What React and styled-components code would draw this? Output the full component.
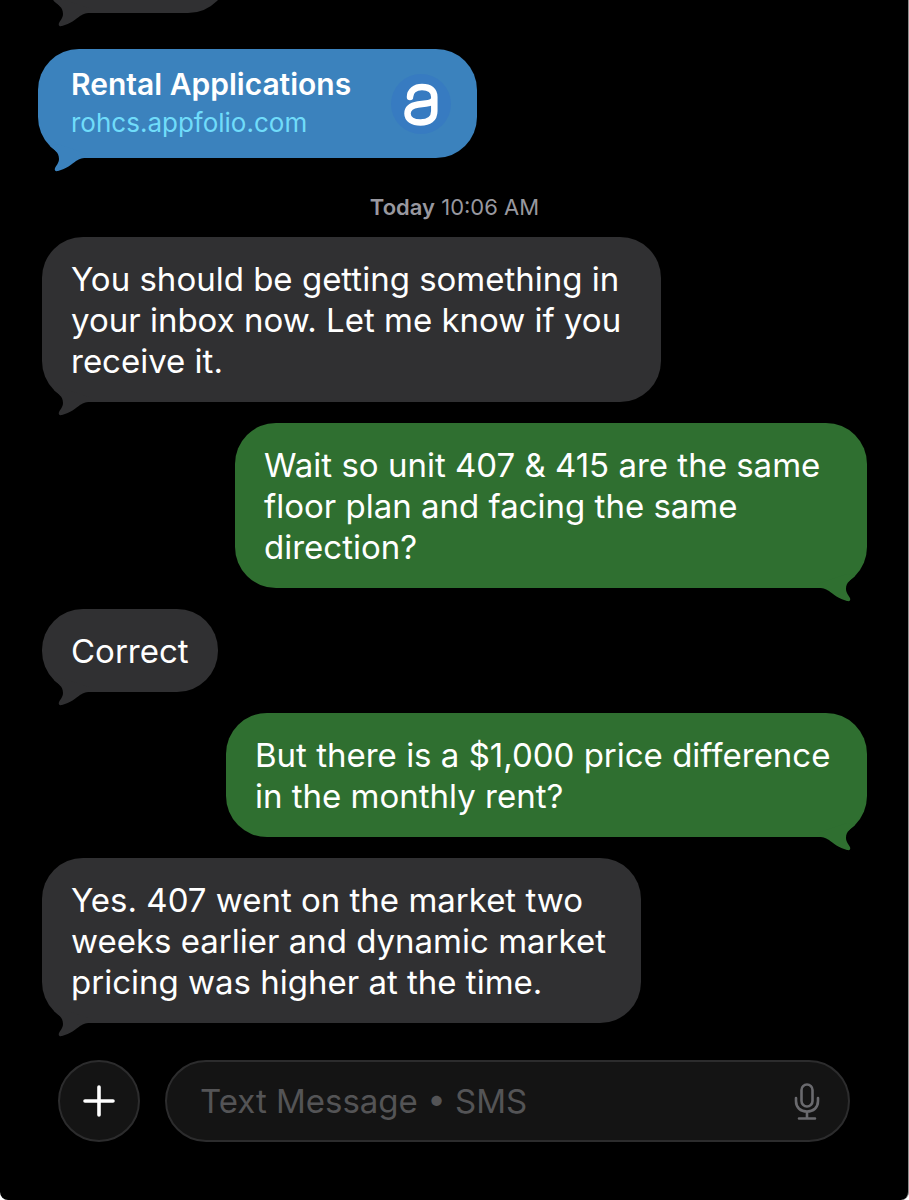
import React from "react";
import styled, { createGlobalStyle, css } from "styled-components";

const GlobalStyle = createGlobalStyle`
  *, *::before, *::after { box-sizing: border-box; }
  body {
    margin: 0;
    background: #fff;
    font-family: Inter, "Liberation Sans", sans-serif;
  }
`;

const Screen = styled.div`
  display: flex;
  flex-direction: column;
  min-height: 100vh;
  overflow: hidden;
  background: #000;
  border-right: 1px solid #8e8e8e;
  border-radius: 0 0 8px 8px;
`;

const Thread = styled.main`
  display: flex;
  flex: 1;
  flex-direction: column;
  gap: 21px;
  padding: 0 41px 37px 42px;
`;

const tones = {
  received: "#303032",
  sent: "#2f6f30",
  link: "#3b82bd",
};

const bubbleShape = css`
  position: relative;
  max-width: 100%;
  color: #fff;
  background: ${(p) => tones[p.$tone]};
  border-radius: 41px;
`;

const Bubble = styled.div`
  ${bubbleShape}
  align-self: ${(p) => (p.$tone === "sent" ? "flex-end" : "flex-start")};
  width: ${(p) => (p.$width ? `${p.$width}px` : "auto")};
  padding: 22px 29px 20px;
  font-size: 33px;
  line-height: 41px;
  white-space: pre-line;
`;

const EarlierBubble = styled(Bubble)`
  height: 83px;
  margin: -70px 0 15px;
`;

const TailShape = styled.svg`
  position: absolute;
  bottom: -14px;
  left: ${(p) => (p.$tone === "sent" ? "auto" : "0")};
  right: ${(p) => (p.$tone === "sent" ? "0" : "auto")};
  transform: ${(p) => (p.$tone === "sent" ? "scaleX(-1)" : "none")};
  fill: ${(p) => tones[p.$tone]};
  pointer-events: none;
`;

const LinkCard = styled.a`
  ${bubbleShape}
  display: flex;
  align-self: flex-start;
  align-items: center;
  justify-content: space-between;
  gap: 32px;
  width: 439px;
  height: 109px;
  margin-left: -4px;
  padding: 0 26px 0 33px;
  text-decoration: none;
`;

const LinkText = styled.span`
  display: flex;
  flex-direction: column;
  white-space: nowrap;
`;

const LinkTitle = styled.span`
  font-size: 30px;
  font-weight: 600;
  line-height: 38px;
`;

const LinkHost = styled.span`
  color: #70dcfa;
  font-size: 26px;
  line-height: 40px;
`;

const Timestamp = styled.time`
  align-self: center;
  margin: 14px 0 -5px;
  color: #98989f;
  font-size: 22px;
  line-height: 28px;

  strong { font-weight: 600; }
`;

const Composer = styled.form`
  display: flex;
  gap: 25px;
  padding: 0 58px;
  margin-bottom: 58px;
`;

const surface = css`
  height: 82px;
  background: #141414;
  border: 2px solid #2c2c2d;
  border-radius: 41px;
`;

const AddButton = styled.button`
  ${surface}
  display: grid;
  flex: 0 0 82px;
  place-items: center;
  padding: 0;
  color: #fff;
`;

const Field = styled.div`
  ${surface}
  display: flex;
  flex: 1;
  align-items: center;
  min-width: 0;
  padding: 0 27px 0 33px;
`;

const MessageInput = styled.input`
  flex: 1;
  min-width: 0;
  padding: 0;
  color: #fff;
  background: none;
  border: 0;
  outline: 0;
  font: 33px/41px Inter, "Liberation Sans", sans-serif;

  &::placeholder { color: #545456; opacity: 1; }
`;

const MicButton = styled.button`
  display: grid;
  place-items: center;
  padding: 0;
  color: #6a6a6e;
  background: none;
  border: 0;
`;

function Tail({ tone }) {
  return (
    <TailShape $tone={tone} width="52" height="44" viewBox="0 0 52 44" aria-hidden="true">
      <path d="M12 18C16 22 21 24 21 31C21 35 18 38 17 40C16 43 18 43.500 20 43C28 41 34 36 38 33C42 30.500 44 30 50 30V26L20 16Z" />
    </TailShape>
  );
}

function Message({ tone, width, children }) {
  return (
    <Bubble $tone={tone} $width={width}>
      {children}
      <Tail tone={tone} />
    </Bubble>
  );
}

function AppfolioLogo() {
  return (
    <svg width="60" height="60" viewBox="0 0 60 60" aria-hidden="true">
      <circle cx="30" cy="30" r="30" fill="#377bc1" />
      <path
        d="M19 23C19 17 24 13 31 13C39 13 43.300 16.500 43.300 23V37C43.300 45 38 48.500 29.500 48.500C21.500 48.500 16.500 45 16.500 39.500C16.500 33.500 21 31.500 27 30.500L35 29.500C39 29 42 28 43 25.500"
        fill="none"
        stroke="#fff"
        strokeWidth="6.500"
        strokeLinecap="round"
      />
    </svg>
  );
}

const messages = [
  { tone: "received", width: 619, text: "You should be getting something in\nyour inbox now. Let me know if you\nreceive it." },
  { tone: "sent", width: 632, text: "Wait so unit 407 & 415 are the same\nfloor plan and facing the same\ndirection?" },
  { tone: "received", text: "Correct" },
  { tone: "sent", width: 641, text: "But there is a $1,000 price difference\nin the monthly rent?" },
  { tone: "received", width: 599, text: "Yes. 407 went on the market two\nweeks earlier and dynamic market\npricing was higher at the time." },
];

export default function App() {
  return (
    <Screen>
      <GlobalStyle />
      <Thread>
        <EarlierBubble $tone="received" $width={187}>
          <Tail tone="received" />
        </EarlierBubble>
        <LinkCard $tone="link" href="#rental-applications">
          <LinkText>
            <LinkTitle>Rental Applications</LinkTitle>
            <LinkHost>rohcs.appfolio.com</LinkHost>
          </LinkText>
          <AppfolioLogo />
          <Tail tone="link" />
        </LinkCard>
        <Timestamp>
          <strong>Today</strong> 10:06 AM
        </Timestamp>
        {messages.map(({ tone, width, text }) => (
          <Message key={text} tone={tone} width={width}>{text}</Message>
        ))}
      </Thread>
      <Composer onSubmit={(event) => event.preventDefault()}>
        <AddButton type="button" aria-label="Add attachment">
          <svg width="34" height="34" viewBox="0 0 34 34" fill="none" stroke="currentColor" strokeWidth="3.600" strokeLinecap="round" aria-hidden="true">
            <path d="M17 3V31M3 17H31" />
          </svg>
        </AddButton>
        <Field>
          <MessageInput type="text" aria-label="Message" placeholder="Text Message • SMS" />
          <MicButton type="button" aria-label="Dictate">
            <svg width="28" height="40" viewBox="0 0 28 40" fill="none" stroke="currentColor" strokeWidth="2.600" strokeLinecap="round" aria-hidden="true">
              <rect x="8.500" y="3.500" width="11" height="22" rx="5.500" />
              <path d="M3 17V20C3 26.500 7.500 30.500 14 30.500C20.500 30.500 25 26.500 25 20V17M14 30.500V37M6 37.500H22" />
            </svg>
          </MicButton>
        </Field>
      </Composer>
    </Screen>
  );
}
